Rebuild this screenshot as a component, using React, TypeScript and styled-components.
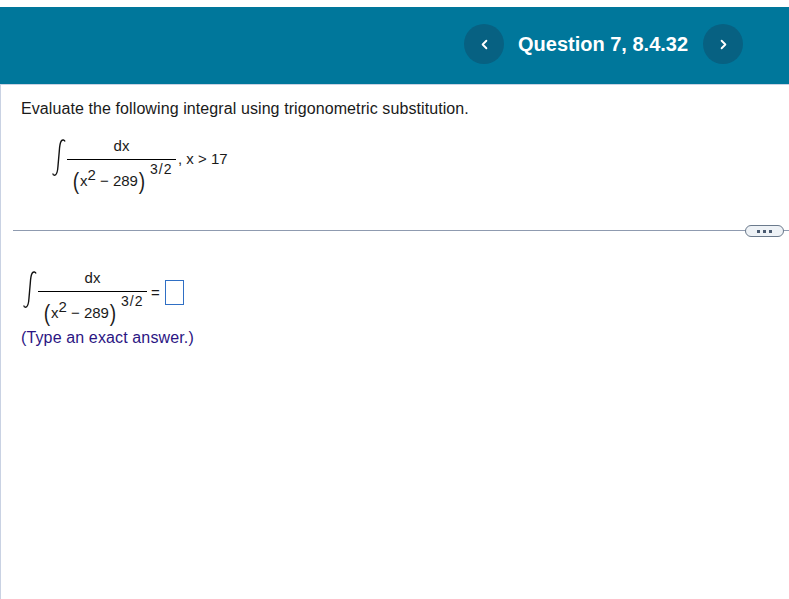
import styled, { createGlobalStyle } from 'styled-components';
import { ChevronLeft, ChevronRight } from 'lucide-react';

const GlobalStyle = createGlobalStyle`
  html, body {
    margin: 0;
    padding: 0;
    background: #fff;
    font-family: "Liberation Sans", Arial, sans-serif;
    color: #1a1a1a;
  }
`;

const Page = styled.div`
  width: 789px;
  height: 599px;
  padding-top: 7px;
  box-sizing: border-box;
  display: flex;
  flex-direction: column;
  overflow: hidden;
`;

const Header = styled.header`
  height: 77px;
  flex: none;
  background: #00779b;
  display: flex;
  align-items: center;
  padding: 0 0 3px 464px;
  box-sizing: border-box;
`;

const NavButton = styled.button`
  width: 40px;
  height: 40px;
  border: 0;
  padding: 0;
  border-radius: 50%;
  background: #076182;
  color: #fff;
  display: flex;
  align-items: center;
  justify-content: center;
`;

const QuestionTitle = styled.h1`
  margin: 0 14px;
  width: 171px;
  font-size: 20px;
  font-weight: 700;
  line-height: 24px;
  color: #fff;
  white-space: nowrap;
`;

const Body = styled.main`
  flex: 1;
  border-top: 1px solid #c9d2e3;
  border-left: 1px solid #c9d2e3;
  display: flex;
  flex-direction: column;
`;

const Prompt = styled.p`
  margin: 15px 0 0 20px;
  font-size: 16px;
  line-height: 18px;
  letter-spacing: 0.09px;
`;

const MathRow = styled.div<{ $left: number; $top: number }>`
  display: flex;
  align-items: flex-start;
  height: 56px;
  margin: ${({ $top }) => $top}px 0 0 ${({ $left }) => $left}px;
  font-size: 15px;
  line-height: 16px;
`;

const IntegralSign = styled.svg`
  width: 14px;
  height: 37px;
  flex: none;
  margin-right: 1px;
`;

const Fraction = styled.div`
  width: 109px;
  flex: none;
`;

const Numerator = styled.div`
  height: 21px;
  line-height: 14px;
  border-bottom: 1px solid #000;
  box-sizing: border-box;
  text-align: center;
`;

const Denominator = styled.div`
  display: flex;
  align-items: center;
  height: 26px;
  margin-top: 8px;
  padding-left: 5px;
  white-space: nowrap;
`;

const Paren = styled.span`
  font-size: 24px;
  line-height: 24px;
  transform: scaleX(0.8);
`;

const Sup = styled.sup`
  font-size: 15px;
  line-height: 0;
  vertical-align: 6px;
`;

const Exponent = styled.span`
  align-self: flex-start;
  margin: -5px 0 0 4px;
  font-size: 14px;
  line-height: 12px;
  letter-spacing: 1px;
`;

const Condition = styled.span`
  margin: 12px 0 0 2px;
  white-space: nowrap;
`;

const Separator = styled.div`
  position: relative;
  height: 1px;
  margin: 35px 0 0 12px;
  background: #8f9bb0;
`;

const MoreButton = styled.button`
  position: absolute;
  right: 5px;
  top: -5px;
  width: 39px;
  height: 12px;
  padding: 0;
  border: 1px solid #6b7a8c;
  border-radius: 6px;
  background: #eef2f6;
  display: flex;
  align-items: center;
  justify-content: center;
  gap: 3px;
`;

const Dot = styled.span`
  width: 3px;
  height: 3px;
  background: #4a5a70;
`;

const Equals = styled.span`
  margin: 14px 0 0 4px;
`;

const AnswerBox = styled.div`
  width: 19px;
  height: 25px;
  margin: 9px 0 0 5px;
  flex: none;
  box-sizing: border-box;
  border: 1px solid #2f6fc4;
  background: #fff;
`;

const Hint = styled.p`
  margin: 2px 0 0 20px;
  font-size: 16px;
  line-height: 18px;
  letter-spacing: 0.13px;
  color: #2b1583;
`;

const Integral = () => (
  <IntegralSign viewBox="0 0 14 37">
    <path
      d="M13 2.500C12.500.8 10.500.3 9.300 2C8 3.800 7.600 7 7.300 12L6 27C5.700 32 5 36.300 2.600 36.300C1.500 36.300.9 35.500.8 34.500"
      fill="none"
      stroke="#111"
      strokeWidth="1.4"
    />
  </IntegralSign>
);

const IntegrandFraction = () => (
  <Fraction>
    <Numerator>dx</Numerator>
    <Denominator>
      <Paren>(</Paren>
      <span>x<Sup>2</Sup> − 289</span>
      <Paren>)</Paren>
      <Exponent>3/2</Exponent>
    </Denominator>
  </Fraction>
);

export default function App() {
  return (
    <Page>
      <GlobalStyle />
      <Header>
        <NavButton aria-label="Previous question">
          <ChevronLeft size={15} strokeWidth={3} />
        </NavButton>
        <QuestionTitle>Question 7, 8.4.32</QuestionTitle>
        <NavButton aria-label="Next question">
          <ChevronRight size={15} strokeWidth={3} />
        </NavButton>
      </Header>
      <Body>
        <Prompt>Evaluate the following integral using trigonometric substitution.</Prompt>
        <MathRow $left={51} $top={21}>
          <Integral />
          <IntegrandFraction />
          <Condition>, x &gt; 17</Condition>
        </MathRow>
        <Separator>
          <MoreButton aria-label="More">
            <Dot />
            <Dot />
            <Dot />
          </MoreButton>
        </Separator>
        <MathRow $left={22} $top={40}>
          <Integral />
          <IntegrandFraction />
          <Equals>=</Equals>
          <AnswerBox />
        </MathRow>
        <Hint>(Type an exact answer.)</Hint>
      </Body>
    </Page>
  );
}
